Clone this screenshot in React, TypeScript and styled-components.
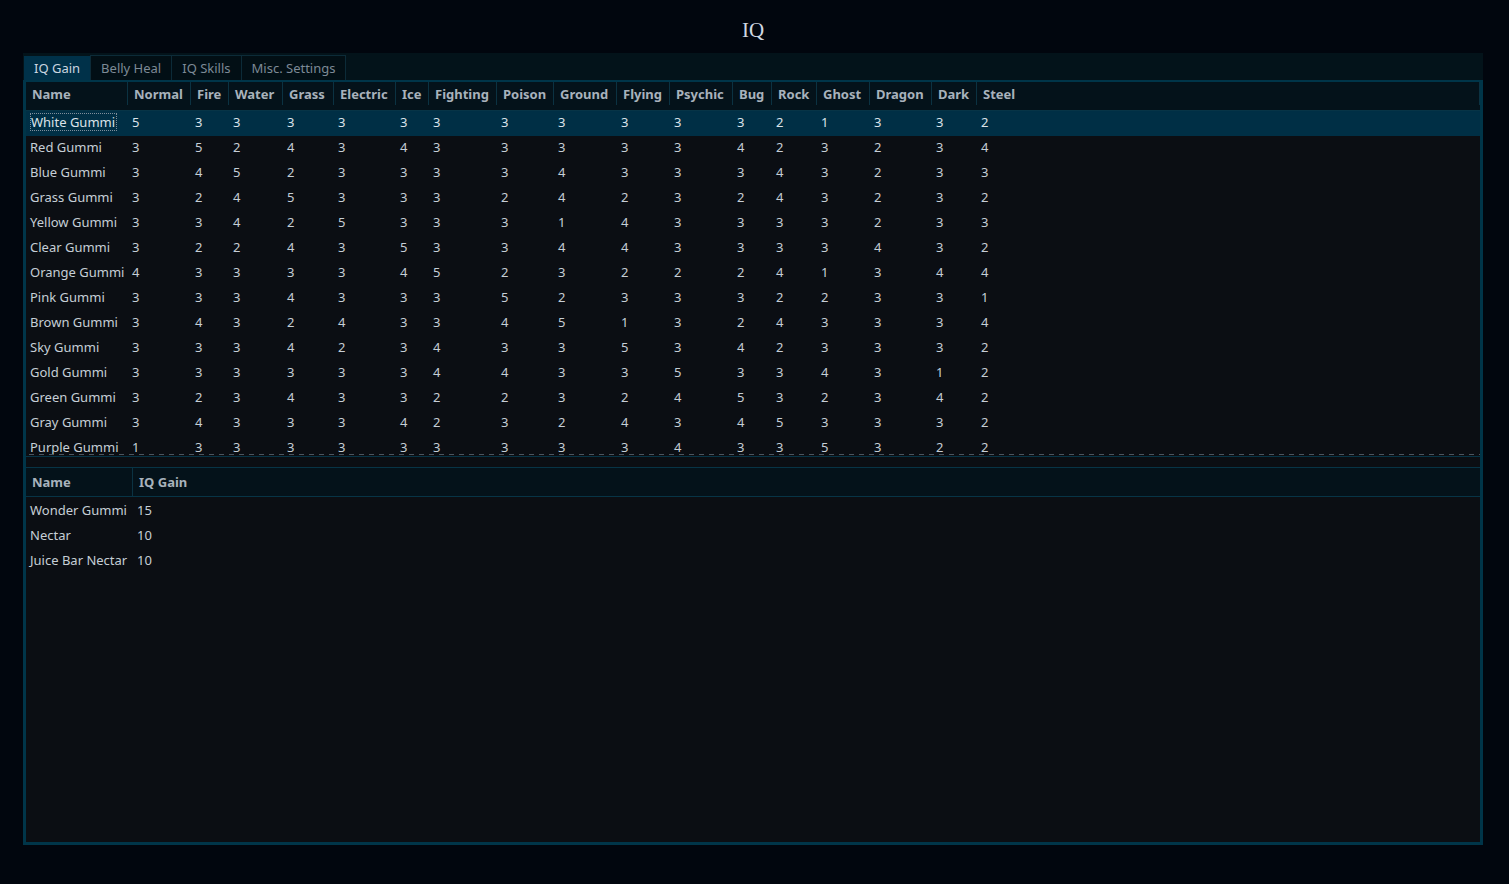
import React from "react";
import styled, { createGlobalStyle } from "styled-components";

const GlobalStyle = createGlobalStyle`
  html, body { margin: 0; padding: 0; background: #01060e; }
  body {
    font-family: "Noto Sans", "Open Sans", sans-serif;
    font-size: 13px;
    color: #c6ced6;
  }
`;

const Page = styled.div`
  width: 1509px;
  height: 884px;
  box-sizing: border-box;
  padding: 0 26px 0 23px;
  display: flex;
  flex-direction: column;
`;

const Title = styled.h1`
  margin: 0;
  height: 53px;
  box-sizing: border-box;
  padding-top: 8px;
  display: flex;
  align-items: center;
  justify-content: center;
  font-family: "Liberation Serif", "Times New Roman", serif;
  font-weight: normal;
  font-size: 21px;
  color: #cfd8e1;
`;

const Frame = styled.div`
  height: 792px;
  display: flex;
  flex-direction: column;
`;

const TabBar = styled.div`
  height: 27px;
  flex: none;
  box-sizing: border-box;
  background: #03131a;
  display: flex;
  align-items: flex-end;
  padding-left: 1px;
`;

const Tab = styled.div<{ $active?: boolean }>`
  box-sizing: border-box;
  height: ${(p) => (p.$active ? 24 : 25)}px;
  padding: 0 10px;
  display: flex;
  align-items: center;
  background: ${(p) => (p.$active ? "#003149" : "#020f15")};
  color: ${(p) => (p.$active ? "#cbd6e0" : "#7d8a96")};
  border: ${(p) => (p.$active ? "none" : "1px solid #0c2b38")};
  border-bottom: none;
  margin-right: ${(p) => (p.$active ? 0 : -1)}px;
  white-space: nowrap;
`;

const Panel = styled.div`
  flex: 1;
  min-height: 0;
  box-sizing: border-box;
  border: 3px solid #003549;
  border-top-width: 2px;
  background: #0b0e13;
  display: flex;
  flex-direction: column;
`;

const HeaderRow = styled.div<{ $cols: string; $top?: boolean }>`
  flex: none;
  display: grid;
  grid-template-columns: ${(p) => p.$cols};
  height: ${(p) => (p.$top ? 30 : 29)}px;
  box-sizing: border-box;
  background: #04121a;
  border-top: ${(p) => (p.$top ? "1px solid #073446" : "none")};
  border-bottom: 1px solid #073446;
`;

const HeaderCell = styled.div`
  display: flex;
  align-items: center;
  padding-left: 6px;
  font-weight: 700;
  color: #a8b2bc;
  border-right: 1px solid #0b3242;
  white-space: nowrap;
  overflow: hidden;
  &:last-child {
    border-right: none;
  }
`;

const Viewport = styled.div<{ $h?: number }>`
  ${(p) => (p.$h ? `height: ${p.$h}px; flex: none;` : "flex: 1;")}
  overflow: hidden;
`;

const Row = styled.div<{ $cols: string; $selected?: boolean }>`
  display: grid;
  grid-template-columns: ${(p) => p.$cols};
  height: 25px;
  background: ${(p) => (p.$selected ? "#002f45" : "transparent")};
  color: ${(p) => (p.$selected ? "#dbe3ea" : "#c6ced6")};
`;

const Cell = styled.div`
  display: flex;
  align-items: center;
  padding-left: 4px;
  white-space: nowrap;
  overflow: hidden;
`;

const FocusText = styled.span`
  border: 1px dotted #7f8e9b;
  line-height: 16px;
  padding-right: 1px;
`;

const DashedLine = styled.div`
  flex: none;
  height: 1px;
  background: repeating-linear-gradient(
    90deg,
    transparent 0 3px,
    #4b555f 3px 8px,
    transparent 8px 10px
  );
`;

const Splitter = styled.div`
  flex: none;
  height: 10px;
  margin-top: 1px;
  border-top: 1px solid #073446;
`;

const TYPES = [
  "Normal", "Fire", "Water", "Grass", "Electric", "Ice", "Fighting", "Poison",
  "Ground", "Flying", "Psychic", "Bug", "Rock", "Ghost", "Dragon", "Dark", "Steel",
];

const GUMMI_COLS =
  "102px 63px 38px 54px 51px 62px 33px 68px 57px 63px 53px 63px 39px 45px 53px 62px 45px 1fr";

const GUMMIS: [string, number[]][] = [
  ["White Gummi", [5, 3, 3, 3, 3, 3, 3, 3, 3, 3, 3, 3, 2, 1, 3, 3, 2]],
  ["Red Gummi", [3, 5, 2, 4, 3, 4, 3, 3, 3, 3, 3, 4, 2, 3, 2, 3, 4]],
  ["Blue Gummi", [3, 4, 5, 2, 3, 3, 3, 3, 4, 3, 3, 3, 4, 3, 2, 3, 3]],
  ["Grass Gummi", [3, 2, 4, 5, 3, 3, 3, 2, 4, 2, 3, 2, 4, 3, 2, 3, 2]],
  ["Yellow Gummi", [3, 3, 4, 2, 5, 3, 3, 3, 1, 4, 3, 3, 3, 3, 2, 3, 3]],
  ["Clear Gummi", [3, 2, 2, 4, 3, 5, 3, 3, 4, 4, 3, 3, 3, 3, 4, 3, 2]],
  ["Orange Gummi", [4, 3, 3, 3, 3, 4, 5, 2, 3, 2, 2, 2, 4, 1, 3, 4, 4]],
  ["Pink Gummi", [3, 3, 3, 4, 3, 3, 3, 5, 2, 3, 3, 3, 2, 2, 3, 3, 1]],
  ["Brown Gummi", [3, 4, 3, 2, 4, 3, 3, 4, 5, 1, 3, 2, 4, 3, 3, 3, 4]],
  ["Sky Gummi", [3, 3, 3, 4, 2, 3, 4, 3, 3, 5, 3, 4, 2, 3, 3, 3, 2]],
  ["Gold Gummi", [3, 3, 3, 3, 3, 3, 4, 4, 3, 3, 5, 3, 3, 4, 3, 1, 2]],
  ["Green Gummi", [3, 2, 3, 4, 3, 3, 2, 2, 3, 2, 4, 5, 3, 2, 3, 4, 2]],
  ["Gray Gummi", [3, 4, 3, 3, 3, 4, 2, 3, 2, 4, 3, 4, 5, 3, 3, 3, 2]],
  ["Purple Gummi", [1, 3, 3, 3, 3, 3, 3, 3, 3, 3, 4, 3, 3, 5, 3, 2, 2]],
];

const OTHER_COLS = "107px 1fr";

const OTHERS: [string, number][] = [
  ["Wonder Gummi", 15],
  ["Nectar", 10],
  ["Juice Bar Nectar", 10],
];

const TABS = ["IQ Gain", "Belly Heal", "IQ Skills", "Misc. Settings"];

export default function App() {
  return (
    <>
      <GlobalStyle />
      <Page>
        <Title>IQ</Title>
        <Frame>
          <TabBar>
            {TABS.map((t, i) => (
              <Tab key={t} $active={i === 0}>
                {t}
              </Tab>
            ))}
          </TabBar>
          <Panel>
            <HeaderRow $cols={GUMMI_COLS}>
              <HeaderCell>Name</HeaderCell>
              {TYPES.map((t) => (
                <HeaderCell key={t}>{t}</HeaderCell>
              ))}
              <HeaderCell />
            </HeaderRow>
            <Viewport $h={343}>
              {GUMMIS.map(([name, vals], r) => (
                <Row key={name} $cols={GUMMI_COLS} $selected={r === 0}>
                  <Cell>{r === 0 ? <FocusText>{name}</FocusText> : name}</Cell>
                  {vals.map((v, i) => (
                    <Cell key={i}>{v}</Cell>
                  ))}
                  <Cell />
                </Row>
              ))}
            </Viewport>
            <DashedLine />
            <Splitter />
            <HeaderRow $cols={OTHER_COLS} $top>
              <HeaderCell>Name</HeaderCell>
              <HeaderCell>IQ Gain</HeaderCell>
            </HeaderRow>
            <Viewport>
              {OTHERS.map(([name, v]) => (
                <Row key={name} $cols={OTHER_COLS}>
                  <Cell>{name}</Cell>
                  <Cell>{v}</Cell>
                </Row>
              ))}
            </Viewport>
          </Panel>
        </Frame>
      </Page>
    </>
  );
}
